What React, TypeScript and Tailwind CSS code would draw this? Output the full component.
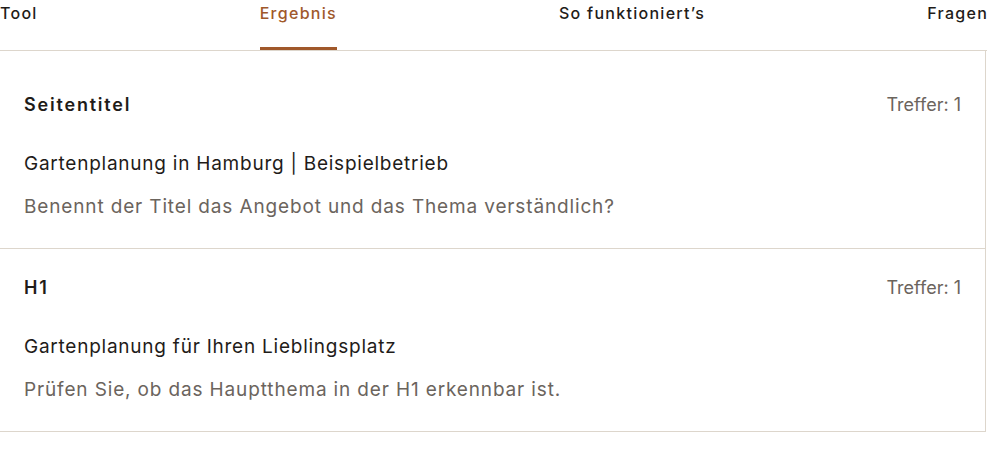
import React from 'react';

const tabs = [
  { label: 'Tool', active: false },
  { label: 'Ergebnis', active: true },
  { label: 'So funktioniert’s', active: false },
  { label: 'Fragen', active: false },
];

const results = [
  {
    title: 'Seitentitel',
    hits: 1,
    value: 'Gartenplanung in Hamburg | Beispielbetrieb',
    hint: 'Benennt der Titel das Angebot und das Thema verständlich?',
  },
  {
    title: 'H1',
    hits: 1,
    value: 'Gartenplanung für Ihren Lieblingsplatz',
    hint: 'Prüfen Sie, ob das Hauptthema in der H1 erkennbar ist.',
  },
];

export default function App() {
  return (
    <div className="w-[987px] h-[450px] overflow-hidden bg-white text-[#1f1c19]" style={{ fontFamily: 'Inter, "Noto Sans", sans-serif' }}>
      {/* tabs */}
      <nav className="flex gap-[222px] border-b border-[#ddd6cc] whitespace-nowrap">
        {tabs.map(tab => (
          <button
            key={tab.label}
            className={`h-[50px] pb-[21px] text-[16px] leading-[26px] font-medium tracking-[0.08em] border-b-[3px] ${
              tab.active ? 'text-[#a0582a] border-[#a0582a]' : 'text-[#1f1c19] border-transparent'
            }`}
          >
            {tab.label}
          </button>
        ))}
      </nav>

      {/* result card */}
      <div className="w-[986px] border-r border-[#ddd6cc] pt-[15px]">
        {results.map(item => (
          <div key={item.title} className="px-6 pt-[25px] pb-[27px] border-b border-[#ddd6cc]">
            <div className="flex items-center justify-between">
              <h3 className="text-[18px] leading-7 font-semibold tracking-[0.1em]">{item.title}</h3>
              <span className="text-[18px] leading-7 text-[#6b645d]">Treffer: {item.hits}</span>
            </div>
            <p className="mt-[31px] text-[19px] leading-7 tracking-[0.04em]">{item.value}</p>
            <p className="mt-[15px] text-[19px] leading-7 text-[#6b645d] tracking-[0.045em]">{item.hint}</p>
          </div>
        ))}
      </div>
    </div>
  );
}
